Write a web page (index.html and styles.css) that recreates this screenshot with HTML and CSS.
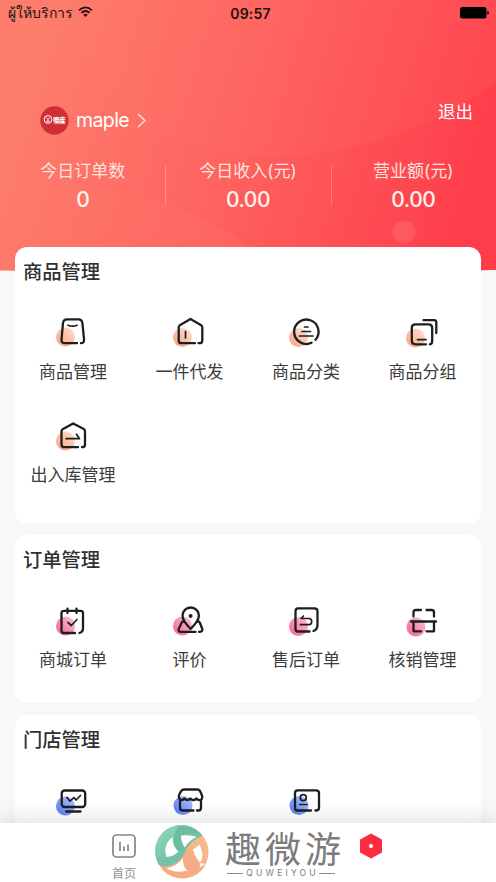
FILE: index.html
```html
<!DOCTYPE html>
<html lang="zh-CN">
<head>
<meta charset="utf-8">
<meta name="viewport" content="width=device-width, initial-scale=1">
<title>商品管理</title>
<link rel="stylesheet" href="styles.css">
</head>
<body>
<svg class="defs" width="0" height="0" aria-hidden="true">
  <defs>
    <linearGradient id="dot-orange" x1="0" y1="1" x2="1" y2="0"><stop offset=".15" stop-color="#faa98d"/><stop offset="1" stop-color="#fde3d2"/></linearGradient>
    <linearGradient id="dot-pink" x1="0" y1="1" x2="1" y2="0"><stop offset=".15" stop-color="#f96d96"/><stop offset="1" stop-color="#fcc5d5"/></linearGradient>
    <linearGradient id="dot-blue" x1="0" y1="1" x2="1" y2="0"><stop offset=".15" stop-color="#5f80f8"/><stop offset="1" stop-color="#b9c8ff"/></linearGradient>
  </defs>
</svg>
<div class="app">
  <header class="hero">
    <svg class="hero-bg" viewBox="0 0 496 272" preserveAspectRatio="none" aria-hidden="true">
      <defs>
        <linearGradient id="base" gradientUnits="userSpaceOnUse" x1="20" y1="80" x2="470" y2="220">
          <stop offset="0" stop-color="#fd7e6d"/><stop offset=".45" stop-color="#fe6460"/><stop offset="1" stop-color="#fe3d4b"/>
        </linearGradient>
        <linearGradient id="disc" gradientUnits="userSpaceOnUse" x1="90" y1="70" x2="440" y2="100">
          <stop offset="0" stop-color="#ff8370" stop-opacity=".06"/><stop offset="1" stop-color="#ff6860" stop-opacity=".2"/>
        </linearGradient>
        <linearGradient id="hill" gradientUnits="userSpaceOnUse" x1="0" y1="220" x2="260" y2="250">
          <stop offset="0" stop-color="#ff8370" stop-opacity="0"/><stop offset="1" stop-color="#ff8170" stop-opacity=".2"/>
        </linearGradient>
      </defs>
      <path d="M0 0H496V270Q248 276 0 270.500Z" fill="url(#base)"/>
      <path d="M68 0Q86 82 152 130Q214 164 308 154Q420 141 496 82V0Z" fill="url(#disc)"/>
      <path d="M0 190Q60 175 120 190Q200 208 262 255L272 272H0Z" fill="url(#hill)"/>
      <circle cx="404" cy="232" r="11.500" fill="#fff" fill-opacity=".1"/>
    </svg>
    <div class="status">
      <div class="carrier"><span>ผู้ให้บริการ</span>
        <svg width="15" height="12" viewBox="0 0 15 12" fill="none" stroke="#231211" stroke-width="1.700"><path d="M1 4.300Q7.500 -1.700 14 4.300M3.400 6.800Q7.500 3.200 11.600 6.800"/><path d="M5.300 8.700Q7.500 7 9.700 8.700L7.500 11Z" fill="#231211" stroke="none"/></svg>
      </div>
      <strong>09:57</strong>
      <svg class="battery" width="29" height="12" viewBox="0 0 29 12"><rect width="26.500" height="11.500" rx="2.500"/><path d="M27.300 3.800Q29 4.300 29 5.800T27.300 7.800Z"/></svg>
    </div>
    <div class="account">
      <div class="user">
        <svg width="29" height="29" viewBox="0 0 29 29"><circle cx="14.500" cy="14.500" r="14.200" fill="#d02f35"/><g fill="none" stroke="#fff"><circle cx="8" cy="13.500" r="3.900" stroke-width="1"/><path d="M6.300 11.700L8 13.500L9.700 11.700M6.300 15.300H9.700M8 13.500V15.300" stroke-width=".9"/></g><text class="brand" x="13.200" y="15.800">噢度</text><path d="M13.800 17.600H25.500" stroke="#fff" stroke-width=".6" stroke-opacity=".8"/></svg>
        <span class="name">maple</span>
        <svg width="9" height="15" viewBox="0 0 9 15" fill="none" stroke="#ffe1dc" stroke-width="1.500"><path d="M1 1L8 7.500L1 14"/></svg>
      </div>
      <a class="logout">退出</a>
    </div>
    <div class="stats">
      <div class="stat"><span>今日订单数</span><b>0</b></div>
      <div class="stat"><span>今日收入(元)</span><b>0.00</b></div>
      <div class="stat"><span>营业额(元)</span><b>0.00</b></div>
    </div>
  </header>

  <main>
    <section class="card card-goods">
      <h2>商品管理</h2>
      <div class="grid orange">
        <div class="item"><svg class="icon" viewBox="0 0 36 36"><circle class="dot" cx="10.500" cy="24" r="9.500"/><path d="M22 30.200H10Q6.200 30.200 6.500 26.500L8 10Q8.400 6.300 12 6.300H23.500Q27 6.300 27.400 10L29 26Q29.500 30.200 26 30.200"/><path class="thin" d="M13 12.300Q17.500 14.100 22 12.300"/></svg><span>商品管理</span></div>
        <div class="item"><svg class="icon" viewBox="0 0 36 36"><circle class="dot" cx="10.500" cy="24.500" r="9.500"/><path d="M23 30.200H9.500Q6.700 30.200 6.700 27.400V14.500Q6.700 12.800 8.200 12L18.500 6L28.800 12Q30.300 12.800 30.300 14.500V27.400Q30.300 30.200 27.500 30.200H26.500"/><path class="thin" d="M13.500 18.500V25"/></svg><span>一件代发</span></div>
        <div class="item"><svg class="icon" viewBox="0 0 36 36"><circle class="dot" cx="10.500" cy="24.500" r="9.500"/><path d="M23.500 29.800A12.200 12.200 0 1 1 27.500 26.800"/><path class="thin" d="M16.500 14H20M14 18.500H22.500M11.500 23H25"/></svg><span>商品分类</span></div>
        <div class="item"><svg class="icon" viewBox="0 0 36 36"><circle class="dot" cx="10.500" cy="25" r="9.500"/><path d="M21 31.300H10.500Q6.800 31.300 6.800 27.600V14.800Q6.800 11.300 10.500 11.300H23.500Q27.200 11.300 27.200 14.800V27.600Q27.200 31.300 24.800 31.300M18.500 7.200H29Q31.300 7.200 31.300 9.500V20"/><path class="thin" d="M12.500 26.700H21"/></svg><span>商品分组</span></div>
        <div class="item"><svg class="icon" viewBox="0 -1 36 36"><circle class="dot" cx="10.500" cy="24" r="9.500"/><path d="M23 30.200H9.500Q6.500 30.200 6.500 27.400V14.500Q6.500 12.800 8 12L18.200 6.500L28.800 12Q30 12.800 30 14.500V27.400Q30 30.200 27 30.200"/><path class="thin" d="M11 21.700H24.500L21.500 17.200"/></svg><span>出入库管理</span></div>
      </div>
    </section>

    <section class="card card-orders">
      <h2>订单管理</h2>
      <div class="grid pink">
        <div class="item"><svg class="icon" viewBox="0 0 36 36"><circle class="dot" cx="10.500" cy="24" r="9.500"/><path d="M20 31H9Q6.500 31 6.500 28.500V11Q6.500 8.800 9 8.800H25.500Q28 8.800 28 11V26.500Q28 30 24.500 31M12.500 6.700V11M21.500 6.700V11"/><path class="thin" d="M13 20.500L16.300 23.500L22 17.500"/></svg><span>商城订单</span></div>
        <div class="item"><svg class="icon" viewBox="0 0 36 36"><circle class="dot" cx="10.500" cy="24" r="9.500"/><path d="M11.500 19.500Q10 19.500 9.500 21L6.700 27Q6 29.900 9 29.900H23.500M27 29.900Q31 30 30.300 27L28 21Q27.500 19.500 25.700 19.500M18.600 27Q10.500 18.500 10.500 13.700A8.200 8.200 0 0 1 26.900 13.700Q26.900 18.500 18.600 27Z"/><circle class="solid" cx="18.600" cy="14" r="2"/></svg><span>评价</span></div>
        <div class="item"><svg class="icon" viewBox="0 0 36 36"><circle class="dot" cx="10.500" cy="24.500" r="9.500"/><path d="M21.500 29.500H10Q7.500 29.500 7.500 27V9Q7.500 6.300 10 6.300H26.500Q29.500 6.300 29.500 9V23Q29.500 27.500 25.500 29"/><path class="thin" d="M15.500 14L13 16.500H21.500Q23.700 17 23.700 19.500Q23.700 22.700 21 22.700H12.500"/></svg><span>售后订单</span></div>
        <div class="item"><svg class="icon" viewBox="0 0 36 36"><circle class="dot" cx="11" cy="25" r="9.500"/><path d="M8.500 14.500V10.500Q8.500 8 11 8H16M21.500 8H26.500Q29 8 29 10.500V14.500M6 19.500H31M8.500 19.500V29.300H16M21.500 29.300H29V19.500"/></svg><span>核销管理</span></div>
      </div>
    </section>

    <section class="card card-store">
      <h2>门店管理</h2>
      <div class="grid blue">
        <div class="item"><svg class="icon" viewBox="0 0 36 36"><circle class="dot" cx="10.500" cy="24" r="9.500"/><rect x="6.700" y="8.500" width="23.500" height="16.500" rx="3"/><path d="M11 29.500H25.500"/><path class="thin" d="M12 15.500L15 19.200L19 15.500L21 18L25.500 13.500"/></svg></div>
        <div class="item"><svg class="icon" viewBox="0 0 36 36"><circle class="dot" cx="11" cy="23.500" r="9.500"/><path d="M21.500 28.500H10.500Q8 28.500 8 26V18M25 28.500H26.500Q29 28.500 29 26V18M7 15Q6.500 14 8 11L9.500 8.700Q10.200 7.500 12 7.500H25.500Q27 7.500 28 9L30 13.500Q31 17.500 28 18Q25.500 18.300 24.300 16.500Q23 18.300 21 18Q19.500 18 18.400 16.500Q17.300 18 15.500 18Q13.700 18 12.500 16.500Q11.300 18 9.500 18Q7 18 7 15Z"/></svg></div>
        <div class="item"><svg class="icon" viewBox="0 0 36 36"><circle class="dot" cx="11" cy="23.500" r="9.500"/><path d="M23 28.500H9.500Q7 28.500 7 26V11Q7 8.300 9.500 8.300H28Q31 8.300 31 11V26Q31 28.500 27.500 28.500"/><circle class="thin" cx="15.300" cy="15.700" r="3"/><path class="thin" d="M11.800 22.500H19"/></svg></div>
      </div>
    </section>
  </main>

  <nav class="tabbar">
    <div class="tab">
      <svg width="24" height="24" viewBox="0 0 24 24" fill="none" stroke="#85858a" stroke-width="1.700"><rect x="1" y="1" width="22" height="22" rx="3.500"/><path d="M8 8V17M12 12.500V17M16 10.500V17"/></svg>
      <span>首页</span>
    </div>
    <div class="tab tab-active">
      <svg width="24" height="26" viewBox="0 0 24 26"><path d="M12 1.500L22 7.200V18.800L12 24.500L2 18.800V7.200Z" fill="#fc2d40" stroke="#fc2d40" stroke-width="2" stroke-linejoin="round"/><circle cx="12" cy="13" r="2" fill="#fff"/></svg>
    </div>
  </nav>

  <div class="watermark">
    <svg class="mark-logo" width="54" height="56" viewBox="0 0 54 56">
      <defs>
        <linearGradient id="mint" x1="0" y1="0" x2="1" y2="1"><stop offset="0" stop-color="#92dbbd"/><stop offset="1" stop-color="#60ad93"/></linearGradient>
        <linearGradient id="peach" x1="0" y1="1" x2="1" y2="0"><stop offset="0" stop-color="#f9a37e"/><stop offset="1" stop-color="#f7c08c"/></linearGradient>
      </defs>
      <circle cx="27.300" cy="27.300" r="26.300" fill="url(#peach)"/>
      <path d="M47.500 10.500A26.300 26.300 0 0 0 4 40Q13 43.500 22 37Q28 32 30 27Q34 17 47.500 10.500Z" fill="url(#mint)"/>
      <path d="M23.500 1.300Q17.500 10 19 19Q22 26 30 27Q25 18 26 10.500Q36 7 44 8Q35 0 23.500 1.300Z" fill="#6dbd9f"/>
      <path d="M1.500 33Q14 33 23.500 26L30 27Q28 32 22 37Q13 43.500 4 40Z" fill="#75c1a6"/>
      <path d="M30 27Q27 37 32 44Q36 50 43 48L49 42Q42 39 39.500 31Q38 26 37 24Z" fill="#f5ab83"/>
      <path d="M11.500 32Q7.500 20 17.500 12Q17.500 22 23.500 26.500Q18.500 31.500 11.500 32ZM26 10.500Q35 9.500 42 12Q33 15.500 30 22.500Q26 17.500 26 10.500ZM38 24.500Q42 22.500 44.500 19.500Q50 31 45 38L50 39L44 43Q47 39 43 35Q39 30 38 24.500ZM11.500 43Q22 41.500 28 33Q27 40 32 45.500Q20 49 11.500 43Z" fill="#fff"/>
    </svg>
    <div class="mark-text">
      <div class="mark-cn">趣微游</div>
      <div class="mark-en"><span>QUWEIYOU</span></div>
    </div>
  </div>
</div>
</body>
</html>
```

FILE: styles.css
```css
* { box-sizing: border-box; }
body {
  margin: 0;
  background: #f8f8fb;
  color: #303030;
  font-family: Inter, "Noto Sans CJK SC", sans-serif;
}
.defs { position: absolute; }
.app {
  position: relative;
  height: 882px;
  overflow: hidden;
  display: flex;
  flex-direction: column;
}
.hero { position: relative; height: 247px; flex: none; color: #fff; }
.hero-bg { position: absolute; left: 0; top: 0; width: 100%; height: 272px; }
.status {
  position: relative;
  height: 26px;
  padding: 0 8px;
  display: grid;
  grid-template-columns: 1fr auto 1fr;
  align-items: center;
  color: #231211;
}
.carrier { display: flex; align-items: center; gap: 6px; font-size: 14px; line-height: 26px; }
.carrier span { white-space: nowrap; }
.carrier svg { margin-top: -3px; margin-left: -1px; }
.status strong { font-size: 14px; font-weight: 600; letter-spacing: .2px; padding-left: 5px; }
.battery { justify-self: end; fill: #000; margin-right: -1px; }
.account {
  position: relative;
  display: flex;
  justify-content: space-between;
  padding: 73px 23px 0 40px;
  height: 133px;
}
.user { display: flex; align-items: center; gap: 8px; height: 42px; }
.brand { font: 900 6.2px "Noto Sans CJK SC", sans-serif; fill: #fff; }
.name { font-size: 19.5px; line-height: 28px; letter-spacing: -.6px; width: 53px; margin-left: -1px; }
.logout { font-size: 17.5px; line-height: 25px; }
.stats { position: relative; display: grid; grid-template-columns: repeat(3, 1fr); }
.stat { display: flex; flex-direction: column; align-items: center; height: 56px; }
.stat + .stat { background: linear-gradient(rgba(255,255,255,.25), rgba(255,255,255,.25)) 0 6px / 1px 40px no-repeat; }
.stat span { font-size: 17px; line-height: 24px; color: #ffe3df; }
.stat b { font-size: 21px; font-weight: 500; line-height: 33px; color: #fff3f0; letter-spacing: -.5px; }
main { position: relative; padding: 0 15px; display: flex; flex-direction: column; gap: 12px; }
.card { background: #fff; border-radius: 12px; }
.card-goods { height: 276px; }
.card-orders { height: 168px; }
.card-store { height: 168px; }
.card h2 { margin: 0; padding: 10.5px 8px 0; height: 66px; font-size: 19.3px; line-height: 28px; font-weight: 500; }
.card-orders h2, .card-store h2 { height: 67px; padding-top: 11px; }
.grid { display: grid; grid-template-columns: repeat(4, 1fr); grid-auto-rows: 103px; }
.item { display: flex; flex-direction: column; align-items: center; }
.item span { font-size: 17px; line-height: 24px; margin-top: 11px; margin-left: -.5px; color: #3c3c3c; }
.card-orders .item span { margin-top: 10px; }
.icon { width: 36px; height: 36px; fill: none; stroke: #1e1e1e; stroke-width: 2.3; stroke-linecap: round; stroke-linejoin: round; }
.icon .dot { stroke: none; }
.icon .thin { stroke-width: 1.7; }
.icon .solid { fill: #1e1e1e; stroke: none; }
.orange .dot { fill: url(#dot-orange); }
.pink .dot { fill: url(#dot-pink); }
.blue .dot { fill: url(#dot-blue); }
.tabbar {
  position: absolute;
  left: 0;
  right: 0;
  bottom: 0;
  height: 59px;
  background: #fff;
  display: grid;
  grid-template-columns: 1fr 1fr;
  box-shadow: 0 -4px 22px rgba(0, 0, 0, .12);
}
.tab { display: flex; flex-direction: column; align-items: center; padding-top: 11px; color: #929297; }
.tab span { font-size: 12px; line-height: 18px; margin-top: 7px; }
.tab-active { padding-top: 10px; padding-right: 2px; }
.watermark { position: absolute; left: 155px; top: 825px; display: flex; gap: 14px; }
.mark-text { width: 120px; display: flex; flex-direction: column; align-items: center; }
.mark-cn { font: 400 36px/40px "Noto Sans CJK SC", sans-serif; color: #7c7c7c; margin-top: 2px; letter-spacing: 4px; margin-right: -4px; white-space: nowrap; }
.mark-en { display: flex; align-items: center; gap: 3px; font: 400 8.5px/8px Inter, sans-serif; color: #7c7c7c; margin-top: 2px; margin-right: 4px; }
.mark-en span { letter-spacing: 3.2px; margin-right: -3.2px; }
.mark-en::before, .mark-en::after { content: ""; width: 16px; height: 1px; background: #8d8d8d; }
```
